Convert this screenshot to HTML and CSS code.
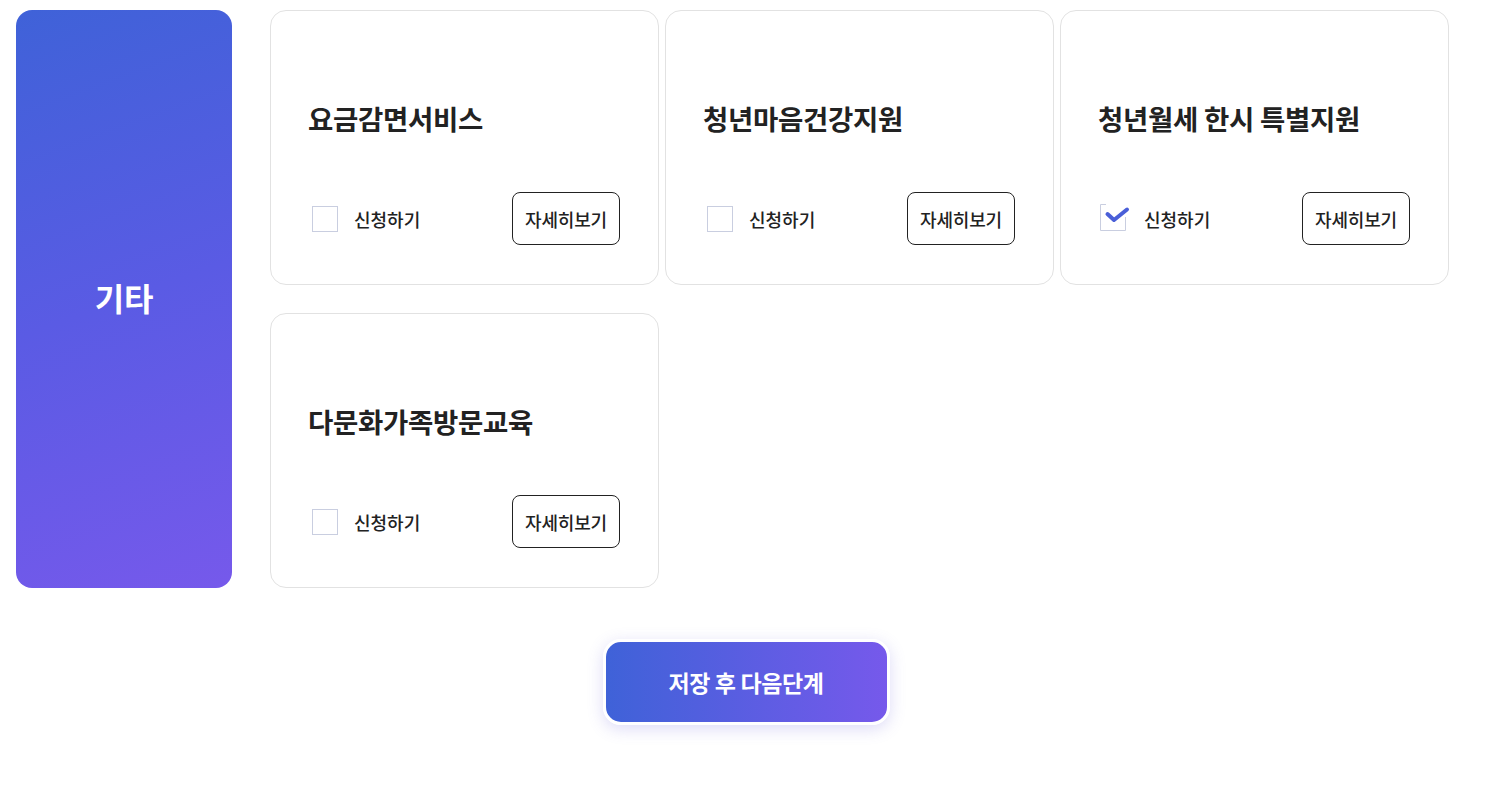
FILE: index.html
```html
<!DOCTYPE html>
<html>
<head lang="ko">
    <meta charset="UTF-8">
    <title>서비스 신청</title>
    <link rel="stylesheet" href="styles.css">
</head>
<body>
    <div id="wrap">
        <div class="group">
            <div class="group-title">기타</div>
            <ul class="cards">
                <li class="card">
                    <h3>요금감면서비스</h3>
                    <div class="card-foot">
                        <label class="check"><span class="box"></span>신청하기</label>
                        <button class="detail">자세히보기</button>
                    </div>
                </li>
                <li class="card">
                    <h3>청년마음건강지원</h3>
                    <div class="card-foot">
                        <label class="check"><span class="box"></span>신청하기</label>
                        <button class="detail">자세히보기</button>
                    </div>
                </li>
                <li class="card">
                    <h3>청년월세 한시 특별지원</h3>
                    <div class="card-foot">
                        <label class="check on">
                            <span class="box">
                                <svg width="30" height="28" viewBox="0 0 30 28">
                                    <path d="M0.5 0.5 V26.5 H25.5 V13 M0.5 0.5 H6" fill="none" stroke="#c9cee0" stroke-width="1"/>
                                    <path d="M7.5 10 L14 16 L27 5.5" fill="none" stroke="#4a5fd8" stroke-width="4" stroke-linecap="round" stroke-linejoin="round"/>
                                </svg>
                            </span>신청하기
                        </label>
                        <button class="detail">자세히보기</button>
                    </div>
                </li>
                <li class="card">
                    <h3>다문화가족방문교육</h3>
                    <div class="card-foot">
                        <label class="check"><span class="box"></span>신청하기</label>
                        <button class="detail">자세히보기</button>
                    </div>
                </li>
            </ul>
        </div>
        <div class="bottom">
            <button class="next">저장 후 다음단계</button>
        </div>
    </div>
</body>
</html>
```

FILE: styles.css
```css
*{
    margin: 0;
    padding: 0;
    box-sizing: border-box;
}
ul {
    list-style: none;
}
body{
    font-family: "Noto Sans CJK KR", "Noto Sans", sans-serif;
    color: #222;
    background: #fff;
}
#wrap{
    padding: 10px 16px 0;
}
.group{
    display: flex;
    gap: 38px;
}
.group-title{
    width: 216px;
    height: 578px;
    flex-shrink: 0;
    border-radius: 16px;
    background: linear-gradient(160deg, #3f62d8 0%, #5a5be4 50%, #7659eb 100%);
    color: #fff;
    font-size: 32px;
    font-weight: 700;
    letter-spacing: -0.3px;
    display: flex;
    align-items: center;
    justify-content: center;
    padding-bottom: 4px;
}
.cards{
    display: grid;
    grid-template-columns: repeat(3, 389px);
    column-gap: 6px;
    row-gap: 28px;
    align-content: start;
}
.card{
    height: 275px;
    border: 1px solid #e2e2e2;
    border-radius: 16px;
    padding: 89px 38px 39px 37px;
    display: flex;
    flex-direction: column;
    justify-content: space-between;
}
.card h3{
    font-size: 27.5px;
    font-weight: 700;
    letter-spacing: -0.3px;
    line-height: 36px;
}
.card-foot{
    display: flex;
    align-items: center;
    justify-content: space-between;
}
.check{
    display: flex;
    align-items: center;
    gap: 16px;
    font-size: 18px;
    font-weight: 500;
    padding-left: 4px;
}
.box{
    position: relative;
    width: 26px;
    height: 26px;
    border: 1px solid #c9cee0;
    background: #fff;
}
.on .box{
    border: none;
    margin-left: -2px;
    margin-right: 2px;
}
.box svg{
    position: absolute;
    left: 0;
    top: -2px;
}
.detail{
    width: 108px;
    height: 53px;
    border: 1px solid #222;
    border-radius: 8px;
    background: #fff;
    font-family: inherit;
    font-size: 18px;
    font-weight: 500;
    color: #222;
    letter-spacing: -0.2px;
}
.bottom{
    display: flex;
    justify-content: center;
    padding: 51px 0 60px 5px;
}
.next{
    width: 287px;
    height: 86px;
    border: 3px solid #fff;
    border-radius: 18px;
    background: linear-gradient(90deg, #3f62d8 0%, #7659eb 100%);
    box-shadow: 0 4px 16px rgba(100, 90, 220, 0.22);
    color: #fff;
    font-family: inherit;
    font-size: 23px;
    font-weight: 700;
    letter-spacing: -0.4px;
}
```
